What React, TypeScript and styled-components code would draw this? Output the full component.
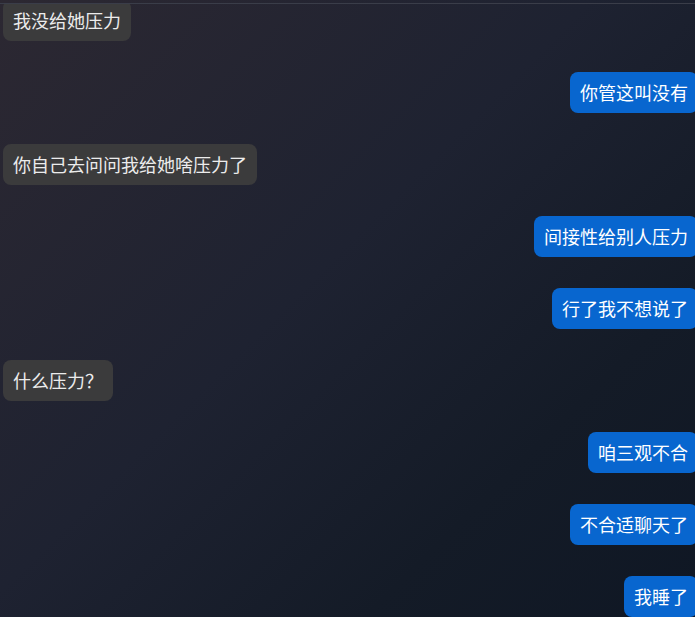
import React from 'react';
import styled, { createGlobalStyle } from 'styled-components';

const GlobalStyle = createGlobalStyle`
  html, body {
    margin: 0;
    padding: 0;
    background: #171c27;
  }
  body {
    font-family: "Noto Sans CJK SC", "Noto Sans", sans-serif;
  }
`;

const Page = styled.div`
  width: 695px;
  height: 617px;
  display: flex;
  flex-direction: column;
  overflow: hidden;
  background: linear-gradient(135deg, #2c2832 0%, #1e2231 45%, #141b27 75%, #0f1724 100%);
`;

const TopEdge = styled.div`
  height: 3px;
  flex-shrink: 0;
  border-bottom: 1px solid #3a3d49;
`;

const ChatScroll = styled.div`
  flex: 1;
  overflow: hidden;
`;

const MessageList = styled.div`
  display: flex;
  flex-direction: column;
  gap: 31px;
  margin-top: -4px;
  padding-left: 3px;
`;

const Row = styled.div<{ $mine?: boolean }>`
  display: flex;
  justify-content: ${p => (p.$mine ? 'flex-end' : 'flex-start')};
  margin-right: ${p => (p.$mine ? '-3px' : '0')};
`;

const Bubble = styled.div<{ $mine?: boolean }>`
  padding: 10px 10px;
  font-size: 18px;
  line-height: 21px;
  border-radius: 8px;
  white-space: nowrap;
  color: ${p => (p.$mine ? '#ffffff' : '#ececec')};
  background: ${p => (p.$mine ? '#0866cf' : '#3b3b3c')};
`;

type Message = { text: string; mine?: boolean };

const messages: Message[] = [
  { text: '我没给她压力' },
  { text: '你管这叫没有', mine: true },
  { text: '你自己去问问我给她啥压力了' },
  { text: '间接性给别人压力', mine: true },
  { text: '行了我不想说了', mine: true },
  { text: '什么压力？' },
  { text: '咱三观不合', mine: true },
  { text: '不合适聊天了', mine: true },
  { text: '我睡了', mine: true },
];

export default function App() {
  return (
    <>
      <GlobalStyle />
      <Page>
        <TopEdge />
        <ChatScroll>
          <MessageList>
            {messages.map((m, i) => (
              <Row key={i} $mine={m.mine}>
                <Bubble $mine={m.mine}>{m.text}</Bubble>
              </Row>
            ))}
          </MessageList>
        </ChatScroll>
      </Page>
    </>
  );
}
